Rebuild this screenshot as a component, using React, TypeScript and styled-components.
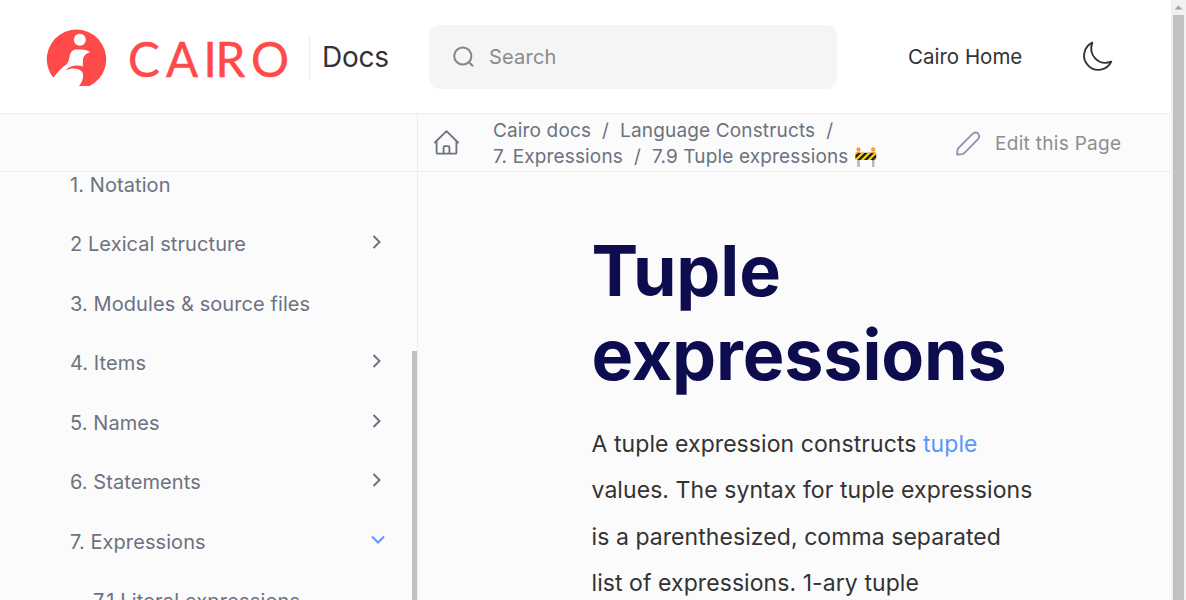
import React from "react";
import styled, { createGlobalStyle } from "styled-components";

const GlobalStyle = createGlobalStyle`
  * { box-sizing: border-box; }
  html, body, #root { margin: 0; height: 100%; overflow: hidden; }
  body { font-family: Inter, "Liberation Sans", sans-serif; background: #fbfbfb; }
  a { color: inherit; text-decoration: none; }
`;

const Window = styled.div`
  display: flex;
  height: 600px;
  width: 1186px;
  overflow: hidden;
`;

const Page = styled.div`
  width: 1171px;
  flex: none;
  display: flex;
  flex-direction: column;
`;

const Header = styled.header`
  height: 114px;
  flex: none;
  display: flex;
  background: #fff;
  border-bottom: 1px solid #ededed;
`;

const Logo = styled.svg`
  display: block;
  width: 250px;
  height: 70px;
  margin: 23px 0 0 42px;
  flex: none;
`;

const LogoText = styled.text`
  font: 400 47.5px Lato, sans-serif;
  fill: #ff4a4a;
  stroke: #ff4a4a;
  stroke-width: 0.5;
`;

const DocsLabel = styled.a`
  margin: 35px 0 0 17px;
  padding-left: 12px;
  width: 120px;
  height: 45px;
  border-left: 1px solid #ededed;
  color: #333;
  font-size: 28px;
  line-height: 44px;
  letter-spacing: -0.25px;
`;

const SearchBox = styled.div`
  width: 408px;
  height: 64px;
  margin-top: 25px;
  padding-left: 23px;
  display: flex;
  align-items: center;
  gap: 12px;
  background: #f5f5f5;
  border-radius: 11px;
  color: #8a8a8a;
  font-size: 20px;
  letter-spacing: 0.2px;
`;

const HomeLink = styled.a`
  margin: 41px 0 0 71px;
  width: 173px;
  line-height: 32px;
  font-size: 20.5px;
  color: #333;
`;

const Moon = styled.svg`
  width: 34px;
  height: 34px;
  margin-top: 40px;
`;

const SubBar = styled.div`
  height: 58px;
  flex: none;
  display: flex;
  border-bottom: 1px solid #ededed;
  color: #6b7280;
`;

const SubBarSide = styled.div`
  width: 418px;
  border-right: 1px solid #ededed;
`;

const HomeIcon = styled.svg`
  width: 28px;
  height: 28px;
  margin: 15px 0 0 14px;
`;

const Crumbs = styled.nav`
  margin: 4px 0 0 33px;
  width: 462px;
  font-size: 19px;
  line-height: 26px;
  letter-spacing: 0.15px;
  white-space: pre;
`;

const EditLink = styled.a`
  display: flex;
  align-items: center;
  gap: 14px;
  height: 58px;
  color: #8e8e8e;
  font-size: 19px;
  letter-spacing: 0.3px;
`;

const Main = styled.div`
  flex: 1;
  min-height: 0;
  display: flex;
`;

const Sidebar = styled.aside`
  width: 418px;
  flex: none;
  display: flex;
  justify-content: space-between;
  border-right: 1px solid #ededed;
  overflow: hidden;
`;

const NavList = styled.ul`
  margin: -17px 0 0;
  padding: 0 0 0 70px;
  list-style: none;
  width: 387px;
`;

const NavItem = styled.li<{ $nested?: boolean }>`
  height: 59.5px;
  padding-left: ${(p) => (p.$nested ? 23 : 0)}px;
  display: flex;
  align-items: center;
  justify-content: space-between;
  color: #6b7280;
  font-size: 20px;
  letter-spacing: ${(p) => (p.$nested ? 0.16 : 0.08)}px;
`;

const Chevron = styled.svg<{ $open?: boolean }>`
  width: 20px;
  height: 20px;
  margin: -3.6px 0 0;
  fill: none;
  stroke: ${(p) => (p.$open ? "#5b95ff" : "#6b7280")};
  stroke-width: 2;
  transform: ${(p) => (p.$open ? "translateX(1px) rotate(90deg)" : "none")};
`;

const SideThumb = styled.div`
  width: 5px;
  margin-top: 179px;
  background: #c1c1c1;
`;

const Article = styled.article`
  padding: 56.5px 0 0 173.5px;
`;

const Title = styled.h1`
  margin: 0;
  font-size: 70px;
  line-height: 84.5px;
  font-weight: 700;
  letter-spacing: -0.15px;
  color: #0c0c4f;
`;

const Body = styled.p`
  margin: 23.5px 0 0;
  font-size: 23px;
  line-height: 46.4px;
  letter-spacing: 0.07px;
  color: #333;
  white-space: nowrap;
`;

const InlineLink = styled.a`
  && { color: #5b95ff; }
`;

const ScrollTrack = styled.div`
  width: 15px;
  display: flex;
  flex-direction: column;
  align-items: center;
  background: #f1f1f1;
`;

const ScrollArrow = styled.svg`
  width: 15px;
  height: 15px;
  flex: none;
`;

const ScrollThumb = styled.div`
  width: 11px;
  flex: 1;
  background: #c1c1c1;
`;

const items: { label: string; chevron?: "closed" | "open"; nested?: boolean }[] = [
  { label: "1. Notation" },
  { label: "2 Lexical structure", chevron: "closed" },
  { label: "3. Modules & source files" },
  { label: "4. Items", chevron: "closed" },
  { label: "5. Names", chevron: "closed" },
  { label: "6. Statements", chevron: "closed" },
  { label: "7. Expressions", chevron: "open" },
  { label: "7.1 Literal expressions", nested: true },
];

export default function App() {
  return (
    <Window>
      <GlobalStyle />
      <Page>
        <Header>
          <Logo viewBox="42 23 250 70" role="img" aria-label="Cairo">
            <path
              fill="#ff4a4a"
              d="M53.300 77.800A29.700 29.700 0 1 1 89.500 86H79C82.500 82 84.500 75.500 82 71.500C78 67.500 72 68 65.500 70C71 65.500 77 64.700 82.800 66.500C83 61 81.500 54.500 90.300 52.300C87 49.200 81 49.300 75 49.500C69.500 51 70 56 68.500 61C67.500 64.500 64 66 61.500 68.500C58.500 71 56 74.500 53.300 77.800Z"
            />
            <circle cx="79.800" cy="39.800" r="6" fill="#fff" />
            <LogoText x="128 166 203.500 215.500 251" y="76.500">CAIRO</LogoText>
          </Logo>
          <DocsLabel>Docs</DocsLabel>
          <SearchBox>
            <svg width="25" height="25" viewBox="0 0 25 25" fill="none" stroke="#858585" strokeWidth="2">
              <circle cx="10.800" cy="11" r="8.600" />
              <path d="M17 17.200L21 21.200" />
            </svg>
            Search
          </SearchBox>
          <HomeLink>Cairo Home</HomeLink>
          <Moon viewBox="0 0 34 34" fill="none" stroke="#333" strokeWidth="1.900" strokeLinejoin="round">
            <path d="M11.300 2.600A14.300 14.300 0 1 0 30.300 21.700C17 26.500 7 14.500 11.300 2.600Z" />
          </Moon>
        </Header>
        <SubBar>
          <SubBarSide />
          <HomeIcon viewBox="0 0 28 28" fill="none" stroke="#6b7280" strokeWidth="1.800" strokeLinecap="round" strokeLinejoin="round">
            <path d="M2.900 13.500L14.500 2.200L26 13.500M4.600 12V23.700Q4.600 24.700 5.600 24.700H23.400Q24.400 24.700 24.400 23.700V12M11.600 24.700V18.500Q11.600 17.200 12.900 17.200H16.100Q17.400 17.200 17.400 18.500V24.700" />
          </HomeIcon>
          <Crumbs>
            <div>Cairo docs  /  Language Constructs  /</div>
            <div>7. Expressions  /  7.9 Tuple expressions 🚧</div>
          </Crumbs>
          <EditLink>
            <svg width="26" height="26" viewBox="0 0 26 26" fill="none" stroke="#8f8fb0" strokeWidth="1.800" strokeLinejoin="round">
              <path d="M2 24.600L2.500 20Q2.700 18.700 3.600 17.800L17.300 4.100Q20.200 1.200 23 3.500Q25.500 6.400 22.800 9.300L9.500 22.900Q8.600 23.800 7.400 24.100Z" />
            </svg>
            Edit this Page
          </EditLink>
        </SubBar>
        <Main>
          <Sidebar>
            <NavList>
              {items.map((item) => (
                <NavItem key={item.label} $nested={item.nested}>
                  {item.label}
                  {item.chevron && (
                    <Chevron viewBox="0 0 20 20" $open={item.chevron === "open"}>
                      <path d="M6.500 4L12.500 10L6.500 16" />
                    </Chevron>
                  )}
                </NavItem>
              ))}
            </NavList>
            <SideThumb />
          </Sidebar>
          <Article>
            <Title>
              Tuple
              <br />
              expressions
            </Title>
            <Body>
              A tuple expression constructs <InlineLink>tuple</InlineLink>
              <br />
              values. The syntax for tuple expressions
              <br />
              is a parenthesized, comma separated
              <br />
              list of expressions. 1-ary tuple
            </Body>
          </Article>
        </Main>
      </Page>
      <ScrollTrack>
        <ScrollArrow viewBox="0 0 15 15">
          <path d="M3.500 9.500L7.500 5.500L11.500 9.500Z" fill="#a3a3a3" />
        </ScrollArrow>
        <ScrollThumb />
      </ScrollTrack>
    </Window>
  );
}
